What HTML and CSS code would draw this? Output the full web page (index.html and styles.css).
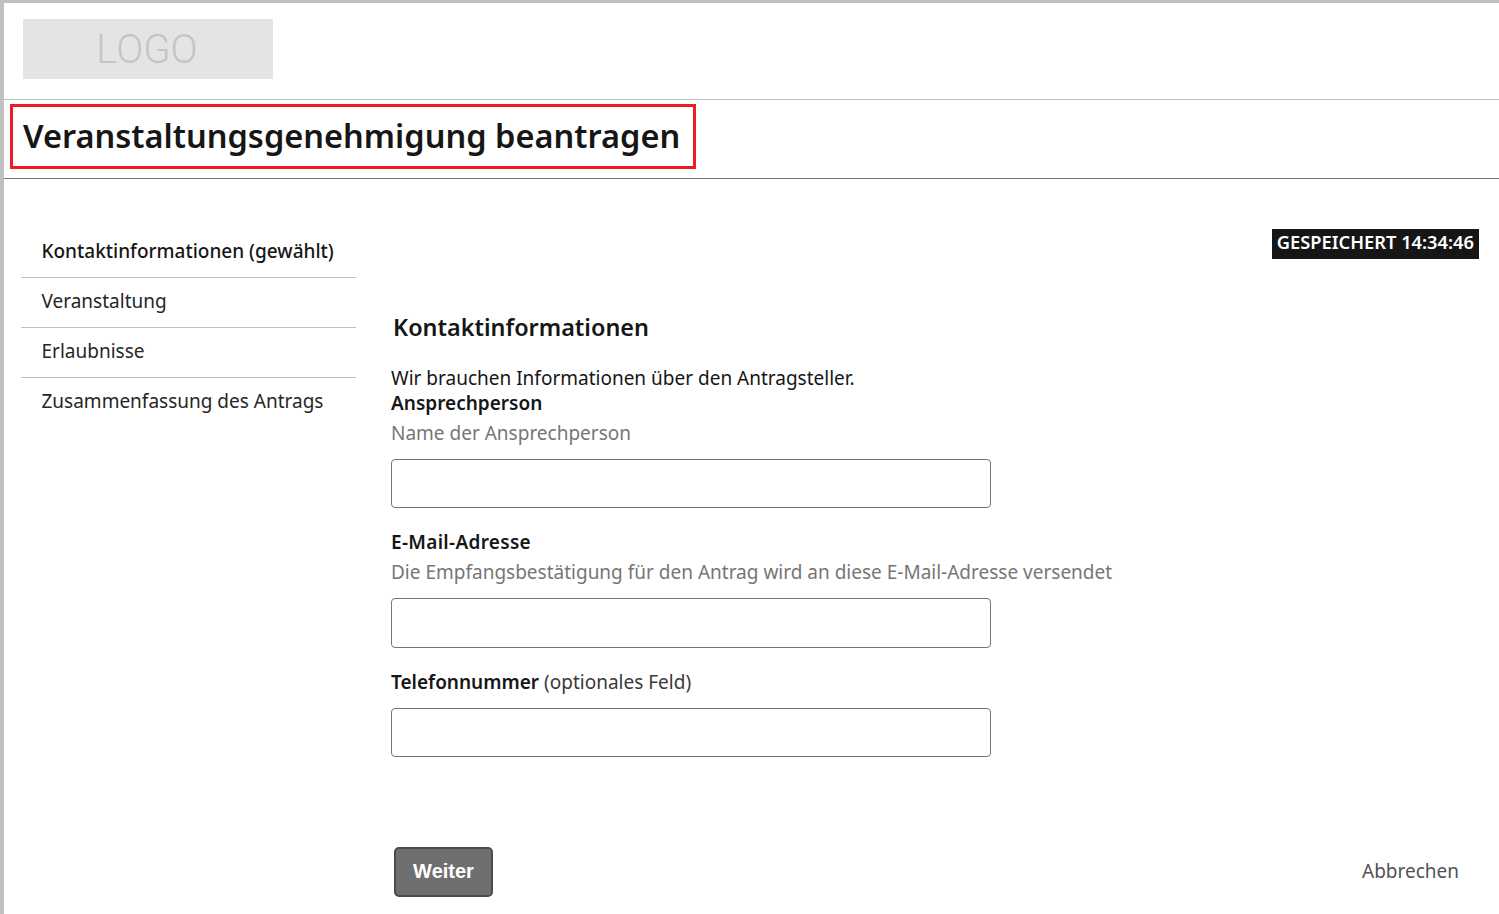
FILE: index.html
```html
<!DOCTYPE html>
<html lang="de">
<head>
<meta charset="utf-8">
<title>Veranstaltungsgenehmigung beantragen</title>
<link rel="stylesheet" href="styles.css">
</head>
<body>
<div class="page">
  <header class="brand">
    <div class="logo">LOGO</div>
  </header>
  <div class="title-band">
    <h1 class="title">Veranstaltungsgenehmigung beantragen</h1>
  </div>
  <div class="layout">
    <nav class="steps">
      <a class="step step-current">Kontaktinformationen (gewählt)</a>
      <a class="step">Veranstaltung</a>
      <a class="step">Erlaubnisse</a>
      <a class="step">Zusammenfassung des Antrags</a>
    </nav>
    <main class="content">
      <div class="status-row"><span class="status">GESPEICHERT 14:34:46</span></div>
      <h2 class="section-title">Kontaktinformationen</h2>
      <p class="intro">Wir brauchen Informationen über den Antragsteller.</p>
      <div class="field field-name">
        <label class="label">Ansprechperson</label>
        <div class="hint">Name der Ansprechperson</div>
        <input class="input" type="text">
      </div>
      <div class="field field-mail">
        <label class="label">E-Mail-Adresse</label>
        <div class="hint">Die Empfangsbestätigung für den Antrag wird an diese E-Mail-Adresse versendet</div>
        <input class="input" type="text">
      </div>
      <div class="field field-phone">
        <label class="label">Telefonnummer <span class="optional">(optionales Feld)</span></label>
        <input class="input" type="text">
      </div>
      <div class="actions">
        <button class="next" type="button">Weiter</button>
        <a class="cancel">Abbrechen</a>
      </div>
    </main>
  </div>
</div>
</body>
</html>
```
FILE: styles.css
```css
* { box-sizing: border-box; }
html, body { margin: 0; padding: 0; }
body {
  font-family: "Noto Sans", "Open Sans", sans-serif;
  font-size: 19px;
  color: #161616;
  background: #fff;
  overflow: hidden;
}
.page {
  width: 1499px;
  height: 914px;
  border-top: 3px solid #c0c0c0;
  border-left: 4px solid #c0c0c0;
}
.brand {
  height: 97px;
  padding: 16px 0 0 19px;
  border-bottom: 1px solid #c0c0c0;
}
.logo {
  width: 250px;
  height: 60px;
  padding-right: 2px;
  background: #e4e4e4;
  color: #c4c4c4;
  font-size: 40px;
  line-height: 61px;
  text-align: center;
  font-family: "Roboto", sans-serif;
  font-weight: 300;
}
.title-band {
  height: 79px;
  padding: 4px 0 0 6px;
  border-bottom: 1px solid #767676;
}
.title {
  display: inline-block;
  margin: 0;
  width: 686px;
  height: 65px;
  padding: 0 0 0 10px;
  border: 3px solid #ed1c24;
  font-size: 32.55px;
  line-height: 58px;
  font-weight: 600;
  color: #161616;
  white-space: nowrap;
}
.layout {
  display: flex;
  align-items: flex-start;
}
.steps {
  width: 335px;
  margin: 49px 0 0 17px;
  display: flex;
  flex-direction: column;
}
.step {
  height: 50px;
  padding: 0 0 0 20.5px;
  line-height: 47px;
  font-size: 19px;
  border-bottom: 1px solid #c0c0c0;
  color: #262626;
}
.step:last-child { border-bottom: 0; }
.step-current { font-weight: 500; line-height: 46px; color: #161616; }
.content {
  flex: 1;
  margin-left: 35px;
  padding-right: 20px;
  height: 732px;
  display: flex;
  flex-direction: column;
}
.status-row {
  display: flex;
  justify-content: flex-end;
  margin-top: 50px;
}
.status {
  height: 30px;
  padding: 0 5px;
  background: #161616;
  color: #fff;
  font-size: 18.3px;
  font-weight: 600;
  line-height: 25px;
  white-space: nowrap;
}
.section-title {
  margin: 52px 0 0 2px;
  font-size: 23.4px;
  line-height: 32px;
  font-weight: 600;
}
.intro {
  margin: 23px 0 0;
  line-height: 25px;
}
.label {
  display: block;
  font-weight: 600;
  line-height: 25px;
}
.optional { font-weight: 400; color: #393939; }
.hint {
  margin-top: 5px;
  line-height: 25px;
  color: #767676;
}
.input {
  display: block;
  width: 600px;
  height: 49px;
  margin-top: 13px;
  border: 1px solid #767676;
  border-radius: 4px;
  background: #fff;
}
.field-mail { margin-top: 22px; }
.field-mail .input { height: 50px; }
.field-mail .label { letter-spacing: 0.3px; }
.field-phone { margin-top: 22px; }
.actions {
  display: flex;
  justify-content: space-between;
  align-items: center;
  margin-top: 90px;
  padding: 0 20px 0 3px;
}
.next {
  width: 99px;
  height: 50px;
  padding: 0 0 2px;
  background: #6f6f6f;
  border: 2px solid #4c4c4c;
  border-radius: 5px;
  color: #fff;
  font: 700 20px "Liberation Sans", sans-serif;
}
.cancel { padding-bottom: 2px; color: #525252; }
```
